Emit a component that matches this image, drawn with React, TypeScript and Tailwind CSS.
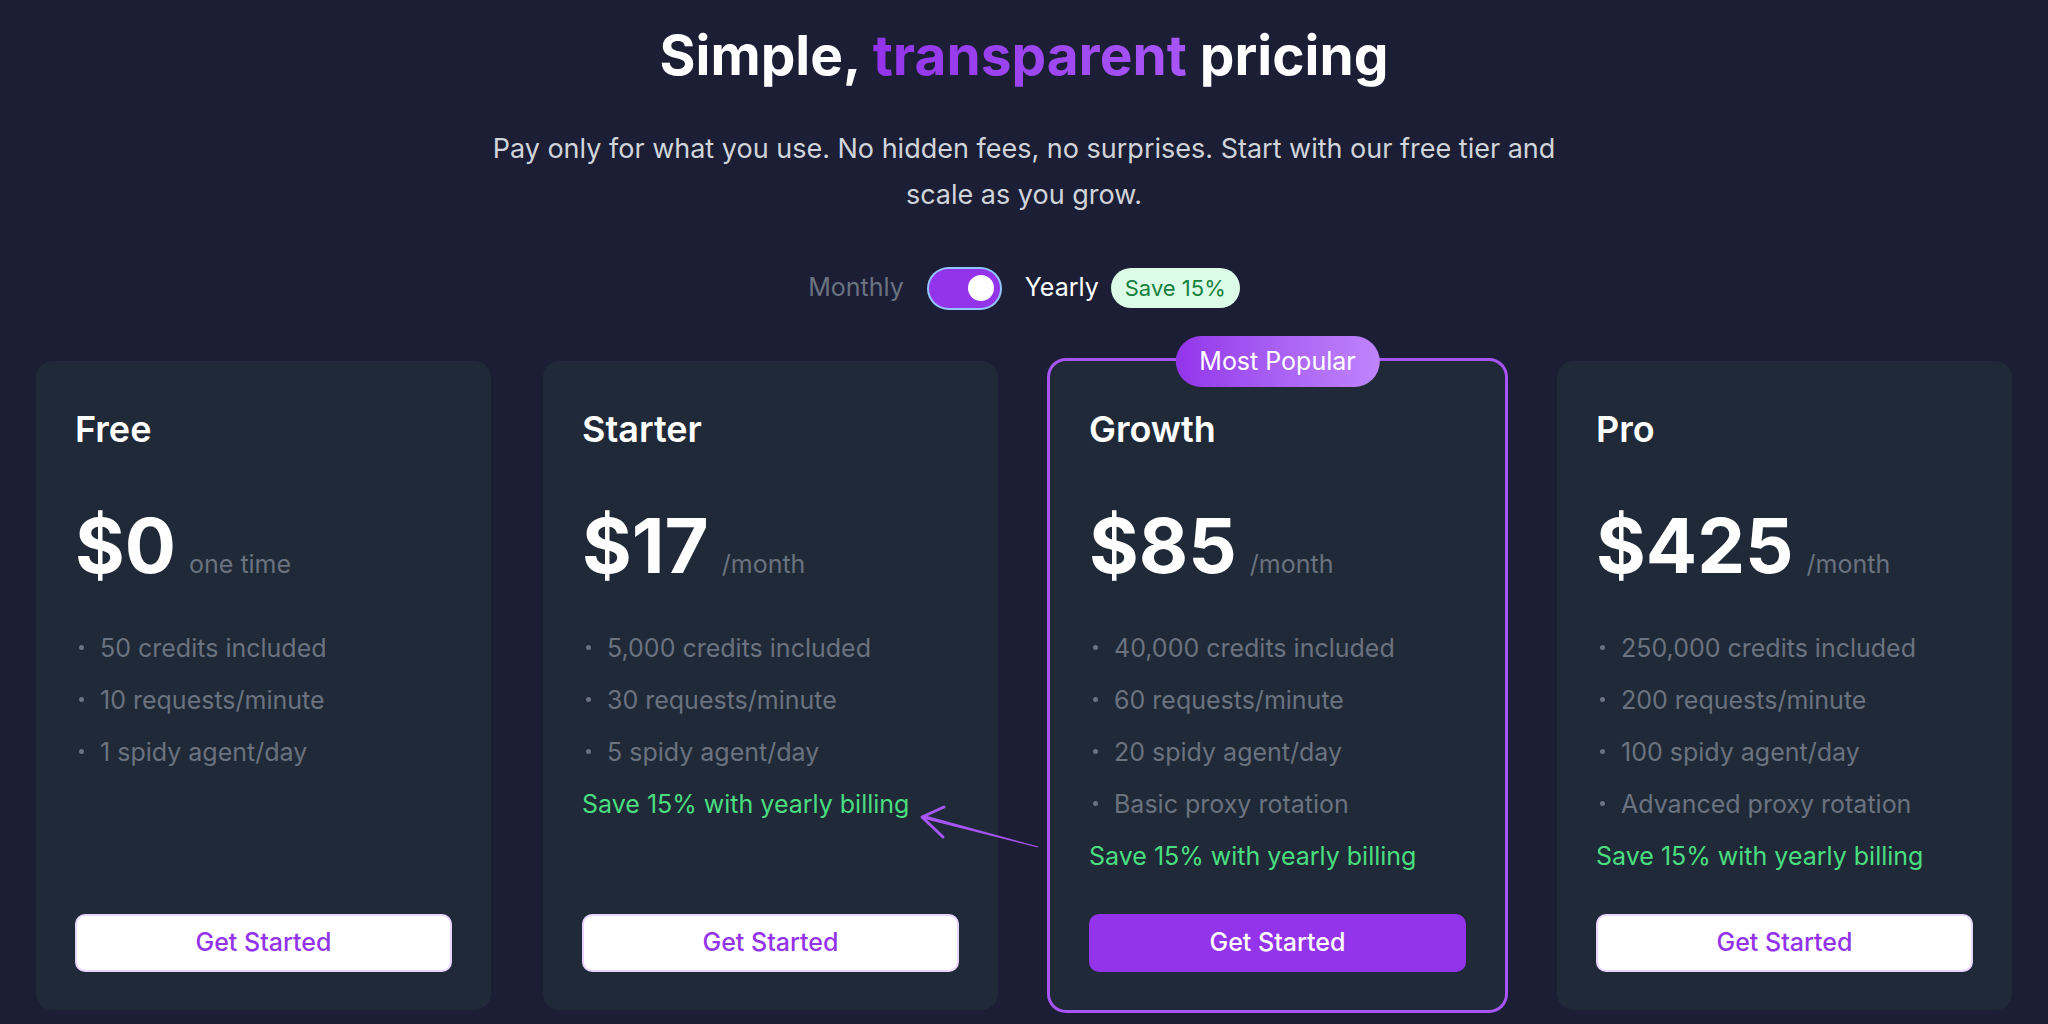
import { useState } from "react";

type Plan = {
  name: string;
  price: string;
  unit: string;
  features: string[];
  saving: boolean;
  popular?: boolean;
};

const PLANS: Plan[] = [
  {
    name: "Free",
    price: "$0",
    unit: "one time",
    features: ["50 credits included", "10 requests/minute", "1 spidy agent/day"],
    saving: false,
  },
  {
    name: "Starter",
    price: "$17",
    unit: "/month",
    features: ["5,000 credits included", "30 requests/minute", "5 spidy agent/day"],
    saving: true,
  },
  {
    name: "Growth",
    price: "$85",
    unit: "/month",
    features: [
      "40,000 credits included",
      "60 requests/minute",
      "20 spidy agent/day",
      "Basic proxy rotation",
    ],
    saving: true,
    popular: true,
  },
  {
    name: "Pro",
    price: "$425",
    unit: "/month",
    features: [
      "250,000 credits included",
      "200 requests/minute",
      "100 spidy agent/day",
      "Advanced proxy rotation",
    ],
    saving: true,
  },
];

function PlanCard({ plan }: { plan: Plan }) {
  return (
    <div
      className={`relative flex flex-col rounded-[16px] bg-[#1f2937] px-[39px] pt-[44px] pb-[38px] ${
        plan.popular ? "ring-[3px] ring-[#a855f7]" : ""
      }`}
    >
      {plan.popular && (
        <div className="absolute left-1/2 -top-[25px] -translate-x-1/2 flex h-[51px] items-center rounded-full bg-gradient-to-r from-[#9333ea] to-[#c084fc] px-[24px] text-[25px] text-white whitespace-nowrap">
          Most Popular
        </div>
      )}

      <h3 className="text-[36px] leading-[48px] font-semibold text-white">{plan.name}</h3>

      <div className="mt-[54px] flex items-baseline gap-[13px]">
        <span className="text-[76px] leading-[76px] font-bold text-white">{plan.price}</span>
        <span className="text-[25px] text-[#6b7280]">{plan.unit}</span>
      </div>

      <ul className="mt-[46px] flex flex-1 flex-col gap-[16px]">
        {plan.features.map((f) => (
          <li key={f} className="flex items-center text-[25px] leading-[36px] text-[#6b7280]">
            <span className="w-[25px] shrink-0">
              <span className="ml-[4px] block h-[5px] w-[5px] rounded-full bg-[#6b7280]" />
            </span>
            {f}
          </li>
        ))}
        {plan.saving && (
          <li className="text-[25px] leading-[36px] text-[#4ade80]">
            Save 15% with yearly billing
          </li>
        )}
      </ul>

      <button
        className={`mt-[40px] h-[58px] w-full rounded-[10px] border-2 text-[25px] font-medium ${
          plan.popular
            ? "border-[#9333ea] bg-[#9333ea] text-white"
            : "border-[#e9d5ff] bg-white text-[#9333ea]"
        }`}
      >
        Get Started
      </button>
    </div>
  );
}

export default function App() {
  const [yearly, setYearly] = useState(true);

  return (
    <div
      className="min-h-screen w-full bg-[#1b1e35] px-[36px] pt-[23px] pb-[12px]"
      style={{ fontFamily: "Inter, 'Liberation Sans', sans-serif" }}
    >
      <h1 className="text-center text-[55px] leading-[65px] font-bold text-white">
        Simple,{" "}
        <span className="bg-gradient-to-r from-[#9333ea] to-[#a855f7] bg-clip-text text-transparent">
          transparent
        </span>{" "}
        pricing
      </h1>

      <p className="mx-auto mt-[38px] max-w-[1100px] text-center text-[27px] leading-[46px] text-[#d1d5db]">
        Pay only for what you use. No hidden fees, no surprises. Start with our free tier and
        scale as you grow.
      </p>

      <div className="mt-[50px] flex items-center justify-center">
        <span className={`text-[25px] ${yearly ? "text-[#6b7280]" : "text-white"}`}>Monthly</span>
        <button
          onClick={() => setYearly((y) => !y)}
          className={`mx-[25px] flex h-[39px] w-[71px] items-center rounded-full px-[6px] ring-2 ring-[#93c5fd] ${
            yearly ? "justify-end bg-[#9333ea]" : "justify-start bg-[#4b5563]"
          }`}
          aria-label="Toggle billing"
        >
          <span className="block h-[26px] w-[26px] rounded-full bg-white" />
        </button>
        <span className={`text-[25px] ${yearly ? "text-white" : "text-[#6b7280]"}`}>Yearly</span>
        <span className="ml-[12px] flex h-[40px] items-center rounded-full bg-[#dcfce7] px-[14px] text-[22px] text-[#15803d]">
          Save 15%
        </span>
      </div>

      <div className="relative mt-[53px] grid grid-cols-4 gap-[52px]">
        {PLANS.map((p) => (
          <PlanCard key={p.name} plan={p} />
        ))}

        <svg
          className="pointer-events-none absolute left-[874px] top-[435px]"
          width="135"
          height="60"
          viewBox="0 0 135 60"
          fill="none"
        >
          <polygon points="14.5,19.3 128.2,50.6 127.8,51.4 13.5,22.7" fill="#a855f7" />
          <polyline
            points="34,11 12,21 33,41"
            stroke="#a855f7"
            strokeWidth="3"
            strokeLinecap="round"
            strokeLinejoin="round"
          />
        </svg>
      </div>
    </div>
  );
}
